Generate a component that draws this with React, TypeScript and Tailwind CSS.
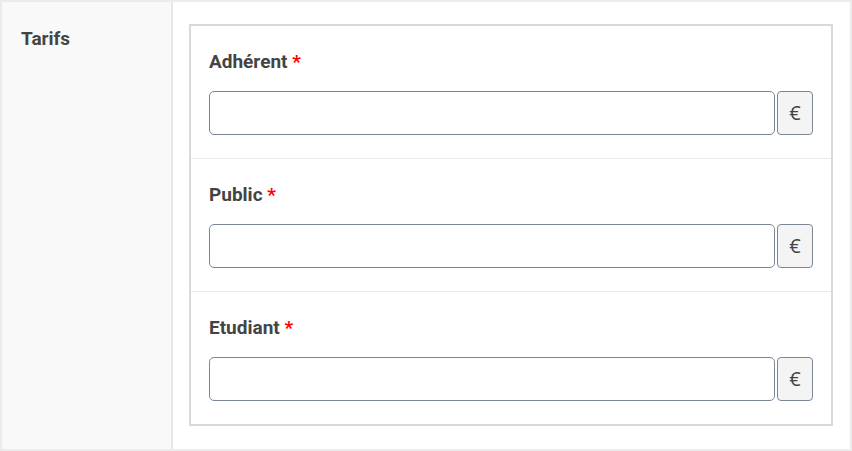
import React from "react";

const fields = ["Adhérent", "Public", "Etudiant"];

export default function App() {
  return (
    <div
      className="w-[852px] h-[451px] flex border-2 border-[#ececec] bg-white"
      style={{ fontFamily: "Roboto, 'Liberation Sans', sans-serif" }}
    >
      <div className="w-[171px] shrink-0 bg-[#f9f9f9] border-r-2 border-[#e8e8e8] pl-[19px] pt-[25px]">
        <div className="text-[19px] leading-[24px] font-bold text-[#444]">Tarifs</div>
      </div>
      <div className="flex-1 pl-[16px] pr-[17px] pt-[22px]">
        <div className="border-2 border-[#d9d9d9] bg-white">
          {fields.map((f, i) => (
            <div
              key={f}
              className={
                "px-[18px] pt-[24px] pb-[23px] " +
                (i < fields.length - 1 ? "border-b border-[#ebebeb]" : "")
              }
            >
              <div className="text-[19px] leading-[24px] font-bold text-[#444] mb-[17px]">
                {f} <span className="text-[#ff0000]">*</span>
              </div>
              <div className="flex h-[44px]">
                <input
                  type="text"
                  className="flex-1 min-w-0 h-full border border-[#7b8794] rounded-[5px] bg-white outline-none px-3"
                />
                <div
                  className="ml-[2px] w-[36px] h-full border border-[#7b8794] rounded-[4px] bg-[#f4f4f4] flex items-center justify-center text-[20px] text-[#444]"
                  style={{ fontFamily: "'Open Sans', 'Noto Sans', sans-serif" }}
                >
                  €
                </div>
              </div>
            </div>
          ))}
        </div>
      </div>
    </div>
  );
}
